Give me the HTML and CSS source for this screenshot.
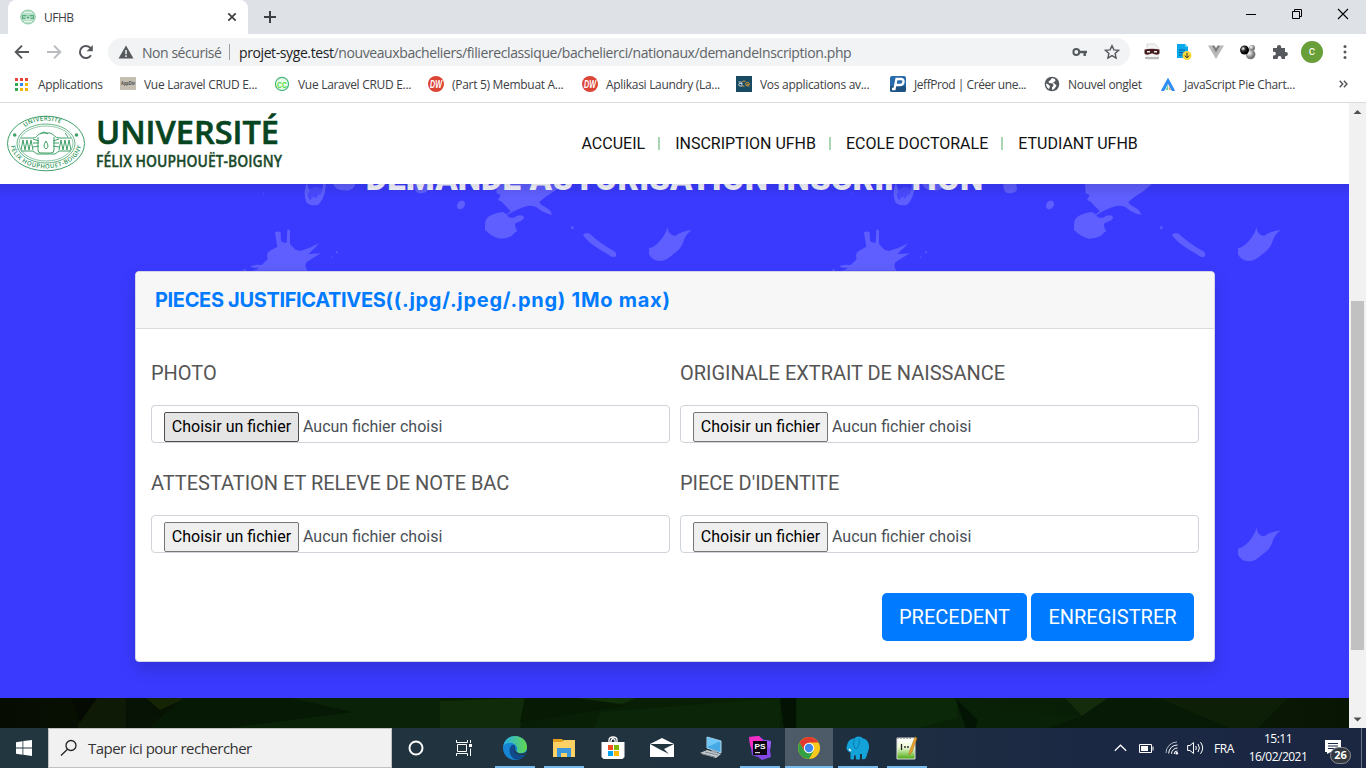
FILE: index.html
```html
<!DOCTYPE html>
<html lang="fr">
<head>
<meta charset="utf-8">
<title>UFHB</title>
<link rel="stylesheet" href="styles.css">
</head>
<body>
<div class="tabs">
  <div class="tab">
    <svg class="fav" width="16" height="16" viewBox="0 0 16 16"><ellipse cx="8" cy="8" rx="7.3" ry="7" fill="#b9dfc8" stroke="#8ecba6"/><path d="M2 6h12v4H2z" fill="#56ad7c"/><path d="M4 7v2M6 7h4v3H6zM12 7v2" stroke="#e3f4ea" fill="none"/><path d="M4 3.5h8M4 12.5h8" stroke="#e8f5ed"/></svg>
    <span class="tab-name">UFHB</span>
    <svg class="tab-x" width="10" height="10" viewBox="0 0 10 10"><path d="M1.3 1.3l7.4 7.4M8.7 1.3l-7.4 7.4" stroke="#3c4043" stroke-width="1.7"/></svg>
  </div>
  <svg class="plus" width="14" height="14" viewBox="0 0 14 14"><path d="M7 1v12M1 7h12" stroke="#3c4043" stroke-width="2"/></svg>
  <div class="winctl">
    <svg width="46" height="28" viewBox="0 0 46 28"><path d="M18 14.5h10" stroke="#000"/></svg>
    <svg width="46" height="28" viewBox="0 0 46 28"><path d="M18.500 11.500h7v7h-7zM20.500 11.500v-2h7v7h-2" fill="none" stroke="#000"/></svg>
    <svg width="46" height="28" viewBox="0 0 46 28"><path d="M18 9l10 10M28 9L18 19" stroke="#000" stroke-width="1.100"/></svg>
  </div>
</div>
<div class="toolbar">
  <div class="navbtns">
    <svg width="16" height="16" viewBox="0 0 16 16" fill="none" stroke="#55585c" stroke-width="1.900"><path d="M15 8H2M8 1.700L1.700 8 8 14.300"/></svg>
    <svg width="16" height="16" viewBox="0 0 16 16" fill="none" stroke="#b9bbbe" stroke-width="1.900"><path d="M1 8h13M8 1.700L14.300 8 8 14.300"/></svg>
    <svg width="16" height="16" viewBox="0 0 16 16"><path d="M13 11.200A6 6 0 1 1 12.600 4.200" fill="none" stroke="#55585c" stroke-width="2"/><path d="M14.800 1v6.200H8.600z" fill="#55585c"/></svg>
  </div>
  <div class="omnibox">
    <svg class="warn" width="16" height="14" viewBox="0 0 16 14"><path d="M8 .5L15.500 13.500H.5z" fill="#55585c"/><path d="M8 5v4.200M8 10.300v1.600" stroke="#f1f3f4" stroke-width="1.500"/></svg>
    <span class="unsafe">Non sécurisé</span><i class="bar"></i>
    <span class="url"><b>projet-syge.test</b><span class="path">/nouveauxbacheliers/filiereclassique/bachelierci/nationaux/demandeInscription.php</span></span>
    <svg class="key" width="16" height="12" viewBox="0 0 16 12"><circle cx="4.300" cy="6" r="2.900" fill="none" stroke="#55585c" stroke-width="2"/><path d="M7 6h8M12.700 6v4" stroke="#55585c" stroke-width="2.400"/></svg>
    <svg class="star" width="16" height="16" viewBox="0 0 16 16"><path d="M8 1.700l1.900 4.200 4.700.4-3.500 3.100 1 4.600L8 11.600 3.900 14l1-4.600L1.400 6.300l4.700-.4z" fill="none" stroke="#55585c" stroke-width="1.400"/></svg>
  </div>
  <div class="exts">
    <svg width="18" height="18" viewBox="0 0 18 18"><path d="M4 1h8l3 3v12H4z" fill="#f4f4f4" stroke="#ccc" stroke-width=".7"/><path d="M1.500 6.500c5-1 10-1 15 0v4c-2 2-5 1-6.500 0H8c-1.500 1-5 2-6.500 0z" fill="#471c20"/><path d="M4 8.700h3M11 8.700h3" stroke="#eee" stroke-width="1.400"/><path d="M2 14h14v2H2z" fill="#bbb"/></svg>
    <svg width="18" height="18" viewBox="0 0 18 18"><path d="M2 1h8l3 3v11H2z" fill="#08a9ec"/><path d="M10 1l3 3h-3z" fill="#5ad3fa"/><path d="M4 7h6M4 9.500h5M4 12h4" stroke="#0c5c99"/><circle cx="12" cy="12.500" r="4.500" fill="#fbd93b"/><path d="M12 9.800v5M9.800 12.600l2.200 2.200 2.200-2.200" stroke="#333" fill="none"/></svg>
    <svg width="18" height="18" viewBox="0 0 18 18"><path d="M1 2.500h3.700L9 10l4.300-7.500H17L9 16z" fill="#b9b9b9"/><path d="M4.700 2.500H7.500L9 5.200l1.500-2.700h2.800L9 10z" fill="#7f7f7f"/></svg>
    <svg width="18" height="18" viewBox="0 0 18 18"><defs><radialGradient id="blk" cx=".35" cy=".35"><stop offset="0" stop-color="#fff"/><stop offset=".5" stop-color="#333"/><stop offset="1" stop-color="#000"/></radialGradient><radialGradient id="gry" cx=".35" cy=".35"><stop offset="0" stop-color="#fff"/><stop offset="1" stop-color="#777"/></radialGradient></defs><circle cx="13" cy="5" r="3" fill="url(#gry)"/><circle cx="11.600" cy="11.500" r="4.800" fill="url(#gry)"/><circle cx="5.500" cy="7" r="4.500" fill="url(#blk)"/></svg>
    <svg width="18" height="18" viewBox="0 0 18 18"><path d="M2 5h4V4a2 2 0 0 1 4.200 0v1H14v4h.8a2 2 0 0 1 0 4.200H14V16h-3.500v-1a1.800 1.800 0 0 0-3.800 0v1H2v-3.500h1a1.800 1.800 0 0 0 0-3.800H2z" fill="#55585c"/></svg>
    <span class="avatar">c</span>
    <svg class="dots" width="18" height="18" viewBox="0 0 18 18" fill="#55585c"><circle cx="9" cy="3.500" r="1.500"/><circle cx="9" cy="9" r="1.500"/><circle cx="9" cy="14.500" r="1.500"/></svg>
  </div>
</div>
<div class="bookmarks">
  <div class="bm"><svg width="13" height="13" viewBox="0 0 13 13"><path d="M0 0h3v3H0zM5 0h3v3H5zM10 0h3v3h-3z" fill="#ea4335"/><path d="M0 5h3v3H0zM0 10h3v3H0z" fill="#34a853"/><path d="M5 5h3v3H5z" fill="#2d8cf0"/><path d="M10 5h3v3h-3zM5 10h3v3H5zM10 10h3v3h-3z" fill="#f5b400"/></svg><span class="t1">Applications</span></div>
  <div class="bm"><svg width="16" height="16" viewBox="0 0 16 16"><path d="M0 1h16v13H0z" fill="#c5bfb2"/><text x="1" y="9" font-size="4.500" font-weight="700" fill="#444" class="tiny" textLength="14" lengthAdjust="spacingAndGlyphs">AppDiv</text></svg><span class="t2">Vue Laravel CRUD E...</span></div>
  <div class="bm"><svg width="16" height="16" viewBox="0 0 16 16"><circle cx="8" cy="8" r="6.600" fill="#e9fbe9" stroke="#43b77a" stroke-width="1.200"/><text x="3" y="11.500" font-size="9.500" font-weight="700" fill="#4cdc3f" class="tiny" textLength="10" lengthAdjust="spacingAndGlyphs">CC</text></svg><span class="t2">Vue Laravel CRUD E...</span></div>
  <div class="bm"><svg width="16" height="16" viewBox="0 0 16 16"><circle cx="8" cy="8" r="8" fill="#db4437"/><text x="2" y="12" font-size="11" font-weight="700" font-style="italic" fill="#fff" class="tiny" textLength="12" lengthAdjust="spacingAndGlyphs">DW</text></svg><span class="t3">(Part 5) Membuat A...</span></div>
  <div class="bm"><svg width="16" height="16" viewBox="0 0 16 16"><circle cx="8" cy="8" r="8" fill="#db4437"/><text x="2" y="12" font-size="11" font-weight="700" font-style="italic" fill="#fff" class="tiny" textLength="12" lengthAdjust="spacingAndGlyphs">DW</text></svg><span class="t4">Aplikasi Laundry (La...</span></div>
  <div class="bm"><svg width="16" height="16" viewBox="0 0 16 16"><path d="M0 0h16v16H0z" fill="#184a63"/><path d="M2.500 6h2.500q1 0 1 1.200v2.800H4a1.300 1.300 0 0 1 0-2.600h2" fill="none" stroke="#ddd" stroke-width=".9"/><path d="M6.500 5.500Q8 4.500 9.500 5.500M6.500 10.200h2" fill="none" stroke="#f0a535" stroke-width=".9"/><path d="M9.500 8.300c0-2.500 4-2.500 4 0h-3M9.500 8.300q.5 2.200 4 1.700" fill="none" stroke="#f0a535" stroke-width=".9"/></svg><span class="t5">Vos applications av...</span></div>
  <div class="bm"><svg width="16" height="16" viewBox="0 0 16 16"><rect width="16" height="16" rx="2" fill="#286bab"/><path d="M0 10h16v4a2 2 0 0 1-2 2H2a2 2 0 0 1-2-2z" fill="#1e5280"/><path d="M2 13h2.500L6.500 3h4.500c4 0 3 6-1 6H6" fill="none" stroke="#fff" stroke-width="2.300"/></svg><span class="t6">JeffProd | Créer une...</span></div>
  <div class="bm"><svg width="16" height="16" viewBox="0 0 16 16"><circle cx="8" cy="8" r="7.300" fill="#55585c"/><path d="M8 2L6.500 4 4.500 5.500 5 7l4 .5.500 2-1.500 2L8 14q2-.5 3-2l1.500-2.500L11 8 9 6.500l2.500-1.500L11 3zM2 7.500l2.500 1L6 10.500 5 13C3 12 2 10 2 7.500z" fill="#fff"/></svg><span class="t7">Nouvel onglet</span></div>
  <div class="bm"><svg width="16" height="16" viewBox="0 0 16 16"><path d="M8 2.500L14.500 14.500H12L8 7 4 14.500H1.500z" fill="#2e8df5" stroke="#2e8df5" stroke-width="1"/><path d="M8 8.500L5.500 14H8z" fill="#6ed3a0"/><path d="M8.800 9.500V14h2.200z" fill="#f4a261"/></svg><span class="t8">JavaScript Pie Chart...</span></div>
  <svg class="more" width="9" height="8" viewBox="0 0 9 8"><path d="M.7.8L3.700 4l-3 3.200M4.900.8L7.900 4l-3 3.200" fill="none" stroke="#55585c" stroke-width="1.500"/></svg>
</div>
<div class="view">
  <div class="page">
    <header class="site">
      <svg class="logo" width="290" height="80" viewBox="0 0 290 80">
        <defs><path id="arcTop" d="M18 38A28 20.500 0 0 1 74 38"/><path id="arcBot" d="M10.500 40A35.500 25.500 0 0 0 81.500 40"/></defs>
        <g fill="none" stroke="#3fa068"><ellipse cx="46" cy="40.500" rx="38.500" ry="27.300"/><ellipse cx="46" cy="40.500" rx="29" ry="19.500" stroke-width=".8"/><ellipse cx="46" cy="40.500" rx="27" ry="17.500" stroke-width=".6"/>
        <path d="M21 35h12c4 0 4-4 9-5h8c4 1 5 5 9 5h12M21 48h12l4 3h18l4-3h12M38 34v13q0 3 3 3h10q3 0 3-3V34M33 36l6 2M33 40h6M33 44l6-1M59 36l-6 2M59 40h-6M59 44l-6-1"/>
        <path d="M21 47l2-10 2 10 2-10 2 10 2-10 2 10M59 47l2-10 2 10 2-10 2 10 2-10 2 10"/><path d="M46 38q-4 6 0 8 4-2 0-8zM40 31l4-2 4 2M65 30l3 4"/></g>
        <g fill="#3fa068"><circle cx="14.700" cy="32" r="1.800"/><circle cx="76.500" cy="32" r="1.800"/></g>
        <text class="seal"><textPath href="#arcTop" startOffset="16" textLength="37">UNIVERSITÉ</textPath></text>
        <text class="seal"><textPath href="#arcBot" startOffset="3" textLength="90">FÉLIX HOUPHOUËT-BOIGNY</textPath></text>
        <text class="logo1" x="96" y="40.500" textLength="183" lengthAdjust="spacingAndGlyphs">UNIVERSITÉ</text>
        <text class="logo2" x="96" y="64" textLength="186" lengthAdjust="spacingAndGlyphs">FÉLIX HOUPHOUËT-BOIGNY</text>
      </svg>
      <nav class="menu"><a>ACCUEIL</a><i></i><a>INSCRIPTION UFHB</a><i></i><a>ECOLE DOCTORALE</a><i></i><a>ETUDIANT UFHB</a></nav>
    </header>
    <main class="hero">
      <svg class="splats" width="1349" height="514" viewBox="0 0 1349 514" fill="#5f5fff">
        <defs>
          <path id="leaf" d="M983 382Q984 405 1005 408 1025 393 1055 390 1038 402 1032 420 1025 447 1000 462 980 482 960 483 935 482 927 462V445Q940 442 950 433 975 410 983 382z"/>
          <g id="group">
            <g transform="translate(0 -84) scale(.33333)">
              <path d="M919 252Q908 285 920 308 935 320 955 314 978 290 977 252H968Q970 270 960 285 955 278 948 295 937 285 932 300 920 295 928 270L922 252z"/>
              <path d="M925 270l20-10 20 5 5 10-10 12-8-4-10 20-14-10z" opacity=".45"/>
              <path d="M726 512L735 506 738 512zM757 512Q777 508 775 503 755 505 752 498 765 493 785 495L803 478Q797 460 810 452L832 440 825 398Q832 392 842 397L843 422Q848 430 860 428L862 390Q866 387 870 391V432L886 449 900 453Q930 445 957 430 945 445 925 462L962 460 920 486Q912 500 922 512z"/>
              <circle cx="995" cy="471" r="2"/><circle cx="1011" cy="457" r="3"/><circle cx="791" cy="280" r="2"/>
            </g>
            <g transform="translate(340 -84) scale(.33333)">
              <path d="M-21 252Q-10 274 14 270 20 275 35 268 45 260 46 252z"/>
              <path d="M223 252Q222 275 235 279 260 282 264 268L262 252z"/>
              <ellipse cx="363" cy="315" rx="11" ry="14" transform="rotate(35 363 315)"/>
              <path d="M468 252L470 280 482 285 474 300 485 305 512 334Q500 342 498 348 520 332 545 323 575 312 590 322 607 338 635 345 636 332 617 322 600 314 598 306 615 290 645 272L668 252z"/>
              <path d="M435 370Q438 350 455 345 470 338 488 336 500 340 505 350 520 358 530 348 552 342 552 355 545 365 527 369 521 377 532 393 520 400 515 408 500 416 480 416 455 410 435 390z"/>
              <circle cx="697" cy="383" r="4"/><path d="M729 405Q735 396 749 401 780 430 825 455 832 463 826 470 815 474 806 464 745 431 729 405z"/>
              <use href="#leaf"/>
            </g>
          </g>
        </defs>
        <use href="#group"/><use href="#group" x="589"/><use href="#leaf" transform="translate(929 216.500) scale(.33333)"/>
      </svg>
      <h1>DEMANDE AUTORISATION INSCRIPTION</h1>
      <div class="shade"></div>
      <section class="card">
        <h2><span class="tight">PIECES JUSTIFICATIVES</span>((.jpg/.jpeg/.png) 1Mo max)</h2>
        <div class="fields">
          <div class="field"><label>PHOTO</label><div class="file"><span class="choose hot">Choisir un fichier</span><span class="none">Aucun fichier choisi</span></div></div>
          <div class="field"><label>ORIGINALE EXTRAIT DE NAISSANCE</label><div class="file"><span class="choose">Choisir un fichier</span><span class="none">Aucun fichier choisi</span></div></div>
          <div class="field"><label>ATTESTATION ET RELEVE DE NOTE BAC</label><div class="file"><span class="choose">Choisir un fichier</span><span class="none">Aucun fichier choisi</span></div></div>
          <div class="field"><label>PIECE D'IDENTITE</label><div class="file"><span class="choose">Choisir un fichier</span><span class="none">Aucun fichier choisi</span></div></div>
        </div>
        <div class="actions"><button class="prev">PRECEDENT</button><button class="save">ENREGISTRER</button></div>
      </section>
    </main>
    <footer class="foot">
      <svg width="1349" height="30" viewBox="0 0 1349 30" preserveAspectRatio="none"><path d="M78 26L97 0h29v30H78z" fill="#0e1a05"/><path d="M72 0h25L80 24z" fill="#050a02"/><path d="M126 0h20l20 30h-38z" fill="#071304"/><path d="M146 0h40L160 12z" fill="#142405"/><path d="M183 0h120L350 14 240 30H148z" fill="#061904"/><path d="M290 0h150v30H230l122-16z" fill="#092208"/><path d="M440 3l85-3-5 30h-80z" fill="#102b0a"/><path d="M525 0h60l40 8-105 16z" fill="#061a04"/><path d="M576 0h60l-14 6z" fill="#12300b"/><path d="M600 14L730 4l50-4v30H594z" fill="#0b2509"/><path d="M780 0h16v30h-12z" fill="#041204"/><path d="M797 0h160v20l-40 10H797z" fill="#0b2809"/><path d="M955 0l25 24-4 6h-10z" fill="#041404"/><path d="M1065 0h43l-26 18z" fill="#142b0c"/><path d="M980 10l102 8-30 12h-76z" fill="#092207"/><path d="M1108 0h50l80 30h-190l34-12z" fill="#061a05"/><path d="M1158 0h130l-30 30h-28z" fill="#0d2007"/></svg>
    </footer>
  </div>
  <div class="scroll">
    <svg width="17" height="17" viewBox="0 0 17 17"><path d="M4.500 11h8l-4-4z" fill="#505050"/></svg>
    <div class="thumb"></div>
    <svg class="down" width="17" height="17" viewBox="0 0 17 17"><path d="M4.500 6.500h8l-4 4z" fill="#505050"/></svg>
  </div>
</div>
<div class="taskbar">
  <div class="start"><svg width="16" height="16" viewBox="0 0 16 16" fill="#fff"><path d="M0 2.200L6.500 1.200v6.400H0zM7.300 1.100L16 0v7.600H7.300zM0 8.400h6.500v6.400L0 13.800zM7.300 8.400H16V16l-8.700-1.200z"/></svg></div>
  <div class="search"><svg width="18" height="18" viewBox="0 0 18 18" fill="none" stroke="#222" stroke-width="1.300"><circle cx="11" cy="6.500" r="5"/><path d="M7.500 10.200L1 16.500"/></svg><span>Taper ici pour rechercher</span></div>
  <div class="cell48"><svg width="16" height="16" viewBox="0 0 16 16"><circle cx="8" cy="8" r="6.500" fill="none" stroke="#fff" stroke-width="2"/></svg></div>
  <div class="cell48"><svg width="17" height="16" viewBox="0 0 17 16" fill="none" stroke="#fff"><path d="M1.500 4.500h9v7h-9zM.5 0v2.500h11V0M.5 16v-2.500h11V16M14.500 0v3M14.500 8.500V16"/><path d="M13 4h3v3h-3z" fill="#fff" stroke="none"/></svg></div>
  <div class="apps">
    <div class="app on"><svg width="24" height="24" viewBox="0 0 24 24"><defs><linearGradient id="eg" x2="1"><stop stop-color="#28afea"/><stop offset="1" stop-color="#62d84c"/></linearGradient></defs><circle cx="12" cy="12" r="12" fill="#1686d4"/><path d="M.3 10C2 3 7 0 12 0c7 0 12 5 12 11 0 4-3 6-6 6-3 .1-5-1.200-4-3C16 9 6 3 .3 10z" fill="url(#eg)"/><path d="M9 9c-5 4-2 13 4 14.500 4 .4 8-2.500 9.500-5.500-5 3-12 0-10.500-5C13 10 11 8 9 9z" fill="#104a8b"/><path d="M12.500 12c-1 3 2 6 6 5.500q3 0 5-2l-1 3c-3 1-8 1-10.500-2-1-2-.5-4 .5-4.500z" fill="#21363f"/></svg></div>
    <div class="app on"><svg width="24" height="24" viewBox="0 0 24 24"><path d="M1 3h9l2 2h11v16H1z" fill="#e3a11b"/><path d="M1 6h9l2-2h11v17H1z" fill="#fdd164"/><path d="M5 12h14v9h-4v-4H9v4H5z" fill="#3d95db"/><path d="M9 17h6v2H9z" fill="#fdd164"/></svg></div>
    <div class="app"><svg width="24" height="24" viewBox="0 0 24 24"><path d="M8 8V4q0-3 4-3t4 3v4M10 8V5q1-4 4-1v4" fill="none" stroke="#fff" stroke-width="1.300"/><path d="M.5 6h23v15l-2 2h-19l-2-2z" fill="#fff"/><path d="M7 9h5v5H7z" fill="#f25022"/><path d="M13 9h5v5h-5z" fill="#7fba00"/><path d="M7 15h5v5H7z" fill="#00a4ef"/><path d="M13 15h5v5h-5z" fill="#ffb900"/></svg></div>
    <div class="app"><svg width="24" height="24" viewBox="0 0 24 24"><path d="M0 8L12 2l12 6v13H0z" fill="#fff"/><path d="M0 8h24l-10 5 5 5-10-5z" fill="#21363f"/></svg></div>
    <div class="app"><svg width="24" height="24" viewBox="0 0 24 24"><path d="M8 1l14 4v12L8 12z" fill="#46a9e6" stroke="#b8d8e8"/><path d="M8 1l14 4L8 11z" fill="#70c7f5"/><path d="M1 17l7-3 14 4-5 4z" fill="#c6cbd0"/><path d="M3 18l13 3M6 16l13 3" stroke="#79848c"/><path d="M13 14l5 1v2l-7-1z" fill="#9aa4aa"/></svg></div>
    <div class="app on"><svg width="24" height="24" viewBox="0 0 24 24"><path d="M1 1l10-1 5 4 7 1-1 9 1 7-9 3-4-3-6-2z" fill="#8247e5"/><path d="M1 1l10-1 4 5H5v10L2 9z" fill="#f52dc0"/><path d="M16 4l7 1-1 9-5-8z" fill="#9a5cff"/><path d="M5 5h14v14H5z" fill="#0b0712"/><text x="6.500" y="12.500" font-size="8" font-weight="700" fill="#fff" class="tiny" textLength="11" lengthAdjust="spacingAndGlyphs">PS</text><path d="M7 16.700h5" stroke="#fff"/></svg></div>
    <div class="app on active"><svg width="24" height="24" viewBox="0 0 24 24"><circle cx="12" cy="12" r="11" fill="#fbc91b"/><path d="M2.500 6.500A11 11 0 0 1 21.500 6.500H12L7.200 14.800z" fill="#e2392f"/><path d="M2.500 6.500A11 11 0 0 0 12 23l4.800-8.200H7.200z" fill="#34a046"/><circle cx="12" cy="12" r="5.200" fill="#fff"/><circle cx="12" cy="12" r="4.200" fill="#4086ef"/></svg></div>
    <div class="app on"><svg width="24" height="24" viewBox="0 0 24 24"><path d="M8 2.500C11-.5 15 0 17 2.500c4 .5 6 4 6 8.500 0 3-1 4-1.500 6L20 22q-2 2-4 1v-5h-2v5q-2 1.500-4 0l-.5-4-1.500.5V23q-2 1-3.500 0v-7.500Q3 17 2 15-.5 13 1 9.500C2 5 4 3 8 2.500z" fill="#14a3d9"/><path d="M9 3c-2 3-2 8 1 10 3-2 4-7 3-10" fill="none" stroke="#087bae"/><path d="M3 13l2 2" stroke="#fff" stroke-width="1.500"/></svg></div>
    <div class="app on"><svg width="24" height="24" viewBox="0 0 24 24"><defs><linearGradient id="ng" x2="0" y2="1"><stop stop-color="#fff"/><stop offset=".45" stop-color="#edfbd5"/><stop offset="1" stop-color="#49a80c"/></linearGradient></defs><path d="M2 2h18v21H2z" fill="url(#ng)" stroke="#ddd"/><path d="M3 1v2M6 1v2M9 1v2M12 1v2M15 1v2" stroke="#777"/><path d="M6.500 8v6" stroke="#222" stroke-width="1.300"/><path d="M9 11h2M12 11h2" stroke="#333" stroke-width="1.600"/><path d="M20 1l2 1-5 14-3 3 1-5z" fill="#e7a32d" stroke="#a86c12" stroke-width=".5"/></svg></div>
  </div>
  <div class="tray">
    <svg class="chev" width="13" height="8" viewBox="0 0 13 8"><path d="M.8 6.700L6.500 1.200l5.700 5.500" fill="none" stroke="#fff" stroke-width="1.200"/></svg>
    <svg class="batt" width="15" height="9" viewBox="0 0 15 9"><path d="M.5.500h12v8H.5zM14 2.500v4" fill="none" stroke="#fff"/><path d="M2 2h7v5H2z" fill="#fff"/></svg>
    <svg class="wifi" width="14" height="14" viewBox="0 0 14 14" fill="none" stroke="#fff"><path d="M1 12A11 11 0 0 1 12 1" stroke="#aeb8c2"/><path d="M3.700 12.500A8.500 8.500 0 0 1 12.500 4M6.500 12.800A6 6 0 0 1 12.500 7M9.200 13a3 3 0 0 1 3.300-3"/><circle cx="11.800" cy="12.300" r="1.300" fill="#fff" stroke="none"/></svg>
    <svg class="snd" width="17" height="14" viewBox="0 0 17 14" fill="none" stroke="#fff"><path d="M.6 4.500H3L6.500 1.500v11L3 9.500H.6zM8.700 5q1.300 2 0 4M11 3q2.800 4 0 8M13.500 1.200q4.300 5.800 0 11.600"/></svg>
    <span class="lang">FRA</span>
    <div class="clock"><span class="hour">15:11</span><span class="date">16/02/2021</span></div>
    <div class="note"><svg width="16" height="14" viewBox="0 0 16 14"><path d="M0 0h16v12H6l-4 2v-2H0z" fill="#fff"/><path d="M3 3.500h10M3 6h10M3 8.500h6" stroke="#1c2a45"/></svg><span class="badge">26</span></div>
  </div>
</div>
</body>
</html>
```
FILE: styles.css
```css
* { box-sizing: border-box; }
body { margin: 0; width: 1366px; height: 768px; overflow: hidden; display: flex; flex-direction: column; font-family: "Open Sans", "Noto Sans", sans-serif; background: #fff; }
svg { display: block; flex: none; }
.tiny { font-family: "Liberation Sans", sans-serif; }

.tabs { height: 34px; flex: none; background: #dee1e6; display: flex; align-items: flex-start; padding-left: 8px; }
.tab { width: 240px; height: 34px; background: #fff; border-radius: 8px 8px 0 0; display: flex; align-items: center; padding: 0 11px 0 12px; }
.tab-name { margin-left: 8px; font-size: 12px; color: #3c4043; letter-spacing: -.5px; flex: 1; }
.plus { margin: 10px 0 0 15px; }
.winctl { margin-left: auto; display: flex; }

.toolbar { height: 36px; flex: none; display: flex; align-items: center; }
.navbtns { display: flex; gap: 16px; padding-left: 14px; width: 108px; }
.omnibox { width: 1022px; height: 28px; border-radius: 14px; background: #f1f3f4; display: flex; align-items: center; font-size: 14px; color: #5f6368; padding-left: 10px; }
.unsafe { margin-left: 8px; width: 80px; white-space: nowrap; letter-spacing: -.45px; }
.bar { width: 1px; height: 16px; background: #9aa0a6; margin-left: 7px; }
.url { margin-left: 9px; white-space: nowrap; letter-spacing: -.4px; flex: 1; }
.url b { font-weight: 400; color: #202124; }
.key { margin-right: 16px; }
.star { margin-right: 10px; }
.exts { display: flex; align-items: center; padding-left: 13px; gap: 14px; }
.avatar { width: 22px; height: 22px; border-radius: 50%; background: #689f38; color: #fff; font: 12px/21px Roboto, sans-serif; text-align: center; margin-left: -2px; }
.dots { margin-left: -1px; }

.bookmarks { height: 33px; flex: none; border-bottom: 1px solid #d9dbdd; display: grid; grid-template-columns: 105px 154px 154px 154px 154px 154px 154px 116px 179px 9px; padding: 0 0 4px 15px; align-items: center; font-size: 12px; color: #3c4043; }
.bm { display: flex; align-items: center; gap: 8px; white-space: nowrap; }
.bm:first-child { gap: 10px; }
.bm span { letter-spacing: -.3px; }
.bm .t6 { letter-spacing: -.45px; }

.view { height: 625px; flex: none; display: flex; }
.page { width: 1349px; display: flex; flex-direction: column; font-family: Roboto, sans-serif; }
.site { height: 81px; flex: none; background: #fff; display: flex; position: relative; z-index: 2; }
.seal { font: 600 6px "Open Sans", sans-serif; fill: #2f965b; }
.logo1 { font: 600 32.500px "Open Sans", sans-serif; fill: #06451f; stroke: #06451f; stroke-width: .6px; }
.logo2 { font: 600 15.500px "Open Sans", sans-serif; fill: #1b4a2b; stroke: #1b4a2b; stroke-width: .3px; }
.menu { margin-left: 291.500px; display: flex; align-items: center; font-size: 16px; color: #111; height: 80px; }
.menu i { width: 2px; height: 13px; background: #a9d5b0; margin: 0 15px 0 13px; }
.hero { height: 514px; flex: none; background: #3a3aff; position: relative; overflow: hidden; display: flex; flex-direction: column; align-items: center; }
.splats { position: absolute; left: 0; top: 0; }
.shade { position: absolute; left: 0; top: 0; width: 100%; height: 14px; background: linear-gradient(rgba(0,0,30,.1), rgba(0,0,30,0)); }
.hero h1 { margin: -25px 0 0; position: relative; font-size: 33px; line-height: 40px; height: 40px; font-weight: 900; color: #f6f6fb; white-space: nowrap; letter-spacing: .15px; }
.card { margin: 72px 0 0 1px; width: 1080px; height: 391px; position: relative; background: #fff; border: 1px solid #d4d4e6; border-radius: 4px; box-shadow: 0 8px 16px rgba(0,0,0,.15); }
.card h2 { margin: 0; height: 57px; padding: 0 19px; background: #f7f7f7; border-bottom: 1px solid #dcdcdc; border-radius: 3px 3px 0 0; color: #007bff; font: 700 20px/56px Inter, sans-serif; white-space: nowrap; letter-spacing: .73px; }
.tight { letter-spacing: -.35px; }
.fields { display: grid; grid-template-columns: 519px 519px; column-gap: 10px; padding: 29px 15px 0; row-gap: 25px; }
.field { height: 85px; display: flex; flex-direction: column; justify-content: space-between; }
.field label { font-size: 20px; line-height: 30px; color: #555; white-space: nowrap; letter-spacing: -.03px; }
.file { height: 38px; border: 1px solid #ced4da; border-radius: 4px; padding: 6px 12px 0; display: flex; gap: 4px; font-size: 16px; line-height: 28px; color: #495057; white-space: nowrap; }
.choose { width: 135px; height: 30px; border: 1px solid #767676; border-radius: 2px; background: #efefef; color: #000; text-align: center; }
.none { line-height: 30px; }
.hot { background: #e5e5e5; border-color: #4f4f4f; }
.actions { display: flex; justify-content: flex-end; gap: 4px; padding: 40px 20px 0 0; }
.actions button { height: 48px; border: 0; border-radius: 5px; background: #007bff; color: #fff; font: 20px Roboto, sans-serif; padding: 0; }
.prev { width: 145px; }
.save { width: 163px; }
.foot { height: 30px; flex: none; background: linear-gradient(90deg, #070c02, #081d05 35%, #092207 70%, #091503); }

.scroll { width: 17px; background: #f1f1f1; display: flex; flex-direction: column; align-items: center; }
.thumb { width: 13px; height: 349px; background: #c1c1c1; margin-top: 181px; }
.down { margin-top: auto; }

.taskbar { height: 40px; flex: none; display: flex; background: linear-gradient(90deg, #21363f, #20323f 55%, #1b2844 80%, #1b2741); }
.start { width: 48px; display: flex; align-items: center; justify-content: center; }
.search { width: 344px; background: #f1f1f1; border: 1px solid #c0c0c0; display: flex; align-items: center; padding-left: 11px; font-size: 15px; color: #333; }
.search span { margin-left: 10px; white-space: nowrap; letter-spacing: -.52px; }
.cell48 { width: 48px; display: flex; align-items: center; justify-content: center; }
.apps { display: flex; margin-left: 3px; gap: 1px; }
.app { width: 48px; height: 40px; display: flex; align-items: center; justify-content: center; background-repeat: no-repeat; }
.on { background-image: linear-gradient(#76b9ed, #76b9ed); background-size: 40px 2px; background-position: 50% 100%; }
.active { background-color: #4d5b68; background-size: 48px 2px; }
.tray { margin-left: auto; display: flex; align-items: center; color: #fff; padding-right: 5px; border-right: 1px solid #6b7486; margin-right: 4px; }
.chev { margin-right: 12px; }
.batt { margin-right: 11px; }
.wifi { margin-right: 8px; }
.snd { margin-right: 10px; }
.lang { font-size: 12px; width: 23px; letter-spacing: -.4px; }
.clock { width: 82px; display: flex; flex-direction: column; text-align: center; font-size: 12px; line-height: 18px; letter-spacing: -.5px; }
.note { position: relative; width: 37px; height: 40px; padding: 12px 0 0 6px; }
.badge { position: absolute; left: 11px; top: 19px; width: 21px; height: 17px; border: 1px solid #8b9097; border-radius: 9px; background: #33383f; font-size: 11px; line-height: 14px; text-align: center; font-weight: 700; }
```
